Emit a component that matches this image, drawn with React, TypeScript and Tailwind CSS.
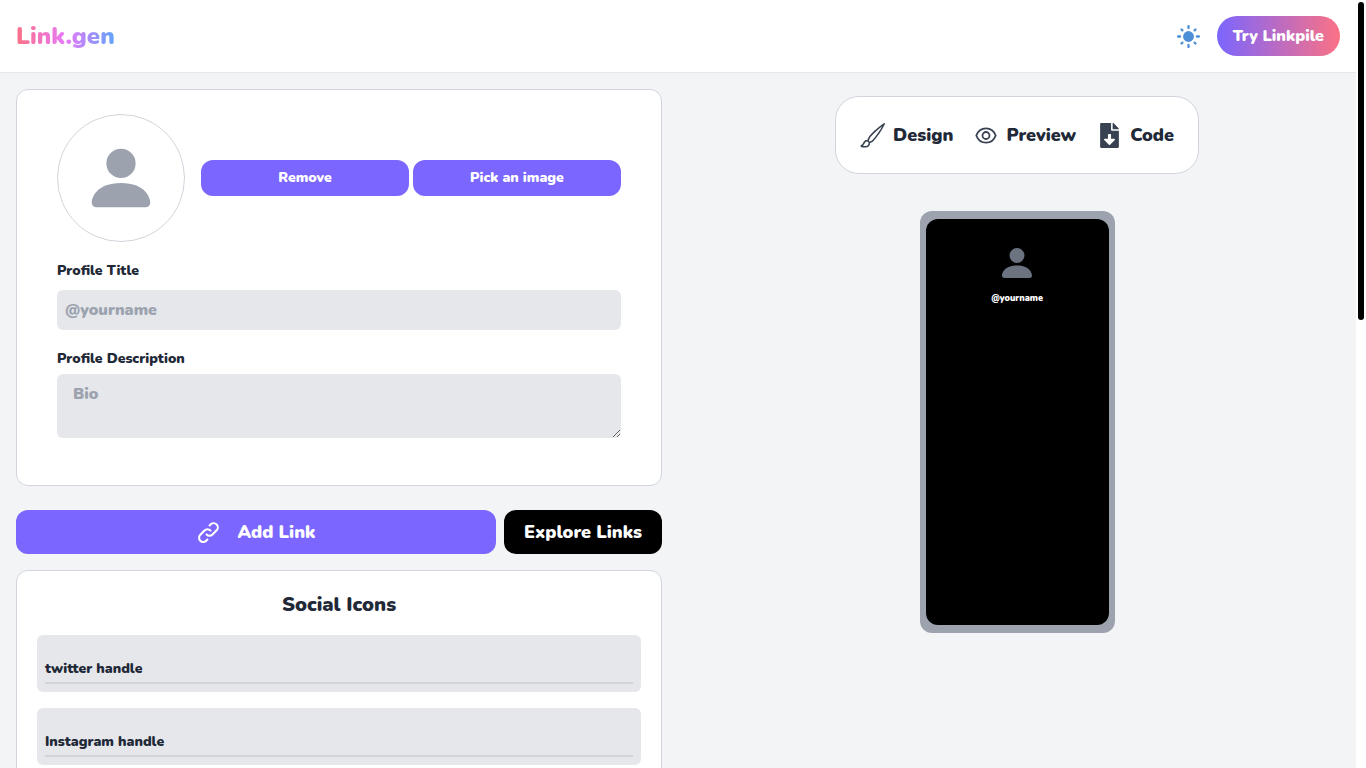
import { useState } from 'react'
import { BsBrush, BsPersonFill } from 'react-icons/bs'
import { FaFileDownload } from 'react-icons/fa'
import { HiOutlineLink } from 'react-icons/hi'

const socials = [
  { id: 'twitter', label: 'twitter handle' },
  { id: 'instagram', label: 'Instagram handle' },
]

function SunIcon() {
  return (
    <svg viewBox="0 0 24 24" className="h-6 w-6" aria-hidden="true">
      <circle cx="11.5" cy="12.5" r="5.4" fill="#4d8fd6" />
      <g stroke="#4d8fd6" strokeWidth="2.3" strokeLinecap="round">
        <path d="M11.5 2.1v2M11.5 20.9v2M1.1 12.5h2M19.9 12.5h2" />
        <path d="M4.5 5.5l.9.9M17.6 18.6l.9.9M4.5 19.5l.9-.9M17.6 6.4l.9-.9" />
      </g>
    </svg>
  )
}

function EyeIcon() {
  return (
    <svg
      viewBox="0 0 24 24"
      className="h-6 w-6 text-[#374151]"
      fill="none"
      stroke="currentColor"
      strokeWidth="1.8"
      strokeLinejoin="round"
      aria-hidden="true"
    >
      <path d="M2.3 12.5C4 7.8 7.8 5.3 12 5.3s8 2.5 9.7 7.2c-1.7 4.7-5.5 7.2-9.7 7.2s-8-2.5-9.7-7.2z" />
      <circle cx="12" cy="12.5" r="3.5" />
    </svg>
  )
}

function Header() {
  return (
    <header className="flex items-center justify-between border-b border-[#e5e7eb] bg-white p-4">
      <h1 className="bg-linear-to-r/srgb from-[#fb7185] via-[#e879f9] to-[#60a5fa] bg-clip-text text-2xl text-transparent">
        Link.gen
      </h1>
      <div className="flex items-center gap-4">
        <button type="button" aria-label="Toggle theme">
          <SunIcon />
        </button>
        <a
          href="#linkpile"
          className="rounded-3xl bg-linear-to-r/srgb from-[#7b66ff] to-[#fb7185] px-4 py-2 text-white"
        >
          Try Linkpile
        </a>
      </div>
    </header>
  )
}

function ProfileCard({
  title,
  onTitle,
}: {
  title: string
  onTitle: (value: string) => void
}) {
  return (
    <section className="rounded-xl border border-[#d1d5db] bg-white px-10 pt-6 pb-[47px]">
      <div className="flex items-center gap-4">
        <div className="grid h-32 w-32 shrink-0 place-items-center rounded-full border border-[#d1d5db]">
          <BsPersonFill className="text-[#9ca3af]" size={78} />
        </div>
        <div className="grid flex-1 grid-cols-2 gap-1 text-sm text-white">
          <button type="button" className="rounded-xl bg-[#7b66ff] py-2">
            Remove
          </button>
          <button type="button" className="rounded-xl bg-[#7b66ff] py-2">
            Pick an image
          </button>
        </div>
      </div>
      <label htmlFor="title" className="mt-[19px] block text-sm">
        Profile Title
      </label>
      <input
        id="title"
        value={title}
        onChange={(e) => onTitle(e.target.value)}
        placeholder="@yourname"
        className="mt-[9px] block h-10 w-full rounded-md bg-[#e5e7eb] px-2 outline-none placeholder:text-[#9ca3af]"
      />
      <label htmlFor="bio" className="mt-[19px] block text-sm">
        Profile Description
      </label>
      <textarea
        id="bio"
        placeholder="Bio"
        className="mt-[5px] block h-16 w-full rounded-md bg-[#e5e7eb] px-4 py-2 outline-none placeholder:text-[#9ca3af]"
      />
    </section>
  )
}

function SocialCard() {
  return (
    <section className="mt-4 rounded-xl border border-[#d1d5db] bg-white p-5">
      <h2 className="text-center text-xl">Social Icons</h2>
      <div className="mt-4 flex flex-col gap-4">
        {socials.map((s) => (
          <div key={s.id} className="relative rounded-md bg-[#e5e7eb] p-2">
            <input
              id={s.id}
              placeholder=" "
              className="peer block h-[41px] w-full border-b-2 border-[#d1d5db] bg-transparent pt-3 text-sm outline-none"
            />
            <label
              htmlFor={s.id}
              className="absolute top-6 left-2 text-sm peer-focus:top-1 peer-focus:text-xs peer-[:not(:placeholder-shown)]:top-1 peer-[:not(:placeholder-shown)]:text-xs"
            >
              {s.label}
            </label>
          </div>
        ))}
      </div>
    </section>
  )
}

function Toolbar() {
  return (
    <nav className="flex gap-[21px] rounded-3xl border border-[#d1d5db] bg-white p-6 text-lg">
      <button type="button" className="flex items-center gap-2">
        <BsBrush size={25} className="text-[#374151]" />
        Design
      </button>
      <button type="button" className="flex items-center gap-2">
        <EyeIcon />
        Preview
      </button>
      <button type="button" className="flex items-center gap-2">
        <FaFileDownload size={25} className="text-[#374151]" />
        Code
      </button>
    </nav>
  )
}

function Phone({ title }: { title: string }) {
  return (
    <div className="mt-[37px] w-[195px] rounded-xl bg-[#9ca3af] px-[6px] py-2">
      <div className="flex h-[406px] flex-col items-center rounded-xl bg-black pt-6">
        <BsPersonFill className="text-[#6b7280]" size={40} />
        <p className="mt-[7px] text-[9px] leading-4 text-white">{title || '@yourname'}</p>
      </div>
    </div>
  )
}

export default function App() {
  const [title, setTitle] = useState('')

  return (
    <div className="flex h-screen bg-white font-['Nunito','Open_Sans',sans-serif] font-black text-[#1f2937]">
      <div className="min-w-0 flex-1 overflow-y-auto bg-[#f3f4f6] [scrollbar-width:none]">
        <Header />
        <main className="grid grid-cols-2">
          <div className="p-4">
            <ProfileCard title={title} onTitle={setTitle} />
            <div className="mt-6 flex gap-2 text-lg text-white">
              <button
                type="button"
                className="flex h-11 flex-1 items-center justify-center gap-4 rounded-xl bg-[#7b66ff]"
              >
                <HiOutlineLink size={25} />
                Add Link
              </button>
              <button type="button" className="h-11 rounded-xl bg-black px-5">
                Explore Links
              </button>
            </div>
            <SocialCard />
          </div>
          <div className="flex flex-col items-center pt-[23px]">
            <Toolbar />
            <Phone title={title} />
          </div>
        </main>
      </div>
      <div className="w-[10px] p-[2px]" aria-hidden="true">
        <div className="h-5/12 rounded-full bg-black" />
      </div>
    </div>
  )
}
